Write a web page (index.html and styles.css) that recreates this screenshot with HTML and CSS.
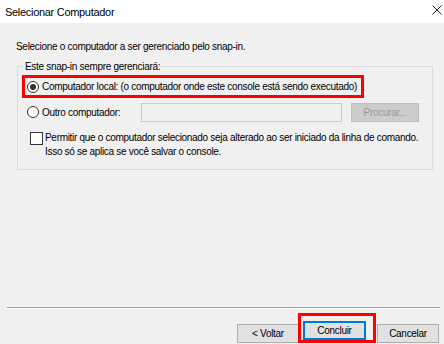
FILE: index.html
```html
<!DOCTYPE html>
<html lang="pt">
<head>
<meta charset="utf-8">
<title>Selecionar Computador</title>
<link rel="stylesheet" href="styles.css">
</head>
<body>
<div class="window">
  <div class="titlebar">
    <span class="title">Selecionar Computador</span>
    <svg class="close" width="10" height="10" viewBox="0 0 10 10"><path d="M0.5 0.5 L9.5 9.5 M9.5 0.5 L0.5 9.5" stroke="#222" stroke-width="1" fill="none"/></svg>
  </div>
  <div class="content">
    <p class="intro">Selecione o computador a ser gerenciado pelo snap-in.</p>
    <fieldset class="group">
      <legend class="legend">Este snap-in sempre gerenciará:</legend>
      <div class="option highlight">
        <span class="radio checked"></span>
        <span class="label">Computador local: (o computador onde este console está sendo executado)</span>
      </div>
      <div class="option other">
        <span class="radio"></span>
        <span class="label other-label">Outro computador:</span>
        <span class="textbox"></span>
        <span class="btn disabled">Procurar...</span>
      </div>
      <div class="check-row">
        <span class="checkbox"></span>
        <span class="check-text">Permitir que o computador selecionado seja alterado ao ser iniciado da linha de comando.<br>Isso só se aplica se você salvar o console.</span>
      </div>
    </fieldset>
  </div>
  <div class="footer">
    <div class="separator"></div>
    <div class="buttons">
      <span class="btn back">&lt; Voltar</span>
      <span class="highlight-btn"><span class="btn focused">Concluir</span></span>
      <span class="btn cancel">Cancelar</span>
    </div>
  </div>
</div>
</body>
</html>
```
FILE: styles.css
```css
* { box-sizing: border-box; }
html, body { margin: 0; padding: 0; }
body {
  width: 444px;
  height: 344px;
  overflow: hidden;
  font-family: "Liberation Sans", Arial, sans-serif;
  font-size: 10px;
  letter-spacing: -0.3px;
  color: #000;
  background: #f0f0f0;
}
.window {
  width: 444px;
  height: 344px;
  display: flex;
  flex-direction: column;
  background: #f0f0f0;
}
.titlebar {
  height: 23px;
  background: #fff;
  display: flex;
  align-items: center;
  justify-content: space-between;
  padding: 0 2px 0 5px;
}
.title {
  font-family: "Liberation Sans", Arial, sans-serif;
  font-size: 11px;
  letter-spacing: -0.3px;
  color: #000;
  padding-top: 1px;
}
.close {
  display: block;
  margin-top: -3px;
}
.content {
  flex: 1;
  padding: 0 0 0 16px;
}
.intro {
  margin: 17px 0 0 0;
  line-height: 13px;
}
.group {
  margin: 7px 0 0 1px;
  width: 416px;
  height: 110px;
  padding: 0;
  border: 1px solid #dcdcdc;
}
.legend {
  padding: 0 1px;
  margin-left: 6px;
  line-height: 13px;
}
.option {
  display: flex;
  align-items: center;
}
.highlight {
  margin: 2px 0 0 4px;
  width: 342px;
  height: 23px;
  border: 3px solid #f00;
  padding-left: 2px;
}
.radio {
  width: 12px;
  height: 12px;
  border: 1px solid #333;
  border-radius: 50%;
  background: #fff;
  display: inline-flex;
  align-items: center;
  justify-content: center;
  flex: none;
}
.radio.checked::after {
  content: "";
  width: 6px;
  height: 6px;
  border-radius: 50%;
  background: #333;
}
.label {
  margin-left: 3px;
  white-space: nowrap;
}
.other {
  margin: 4px 0 0 9px;
  height: 20px;
}
.other-label {
  width: 99px;
}
.textbox {
  width: 201px;
  height: 19px;
  border: 1px solid #ccc;
  background: #f0f0f0;
  flex: none;
}
.btn {
  display: inline-flex;
  align-items: center;
  justify-content: center;
  height: 19px;
  border: 1px solid #adadad;
  background: #e1e1e1;
  flex: none;
}
.btn.disabled {
  margin-left: 9px;
  width: 68px;
  background: #cccccc;
  border-color: #bfbfbf;
  color: #9a9a9a;
}
.check-row {
  display: flex;
  align-items: flex-start;
  margin: 10px 0 0 12px;
}
.checkbox {
  width: 13px;
  height: 13px;
  border: 1px solid #333;
  background: #fff;
  flex: none;
}
.check-text {
  margin-left: 2px;
  line-height: 14px;
  margin-top: -1px;
}
.footer {
  display: flex;
  flex-direction: column;
}
.separator {
  margin: 0 4px 0 7px;
  height: 2px;
  border-top: 1px solid #a0a0a0;
  border-bottom: 1px solid #fff;
}
.buttons {
  display: flex;
  align-items: flex-end;
  justify-content: flex-end;
  margin-top: 4px;
  padding: 0 5px 1px 0;
}
.back { width: 62px; }
.highlight-btn {
  display: flex;
  border: 3px solid #f00;
  padding: 5px 7px 0 2px;
  margin-left: -1px;
}
.focused {
  width: 63px;
  border: 1px solid #0078d7;
  box-shadow: inset 0 0 0 1px #0078d7;
  background: #e1e1e1;
}
.cancel {
  width: 62px;
  margin-left: 1px;
}
```
